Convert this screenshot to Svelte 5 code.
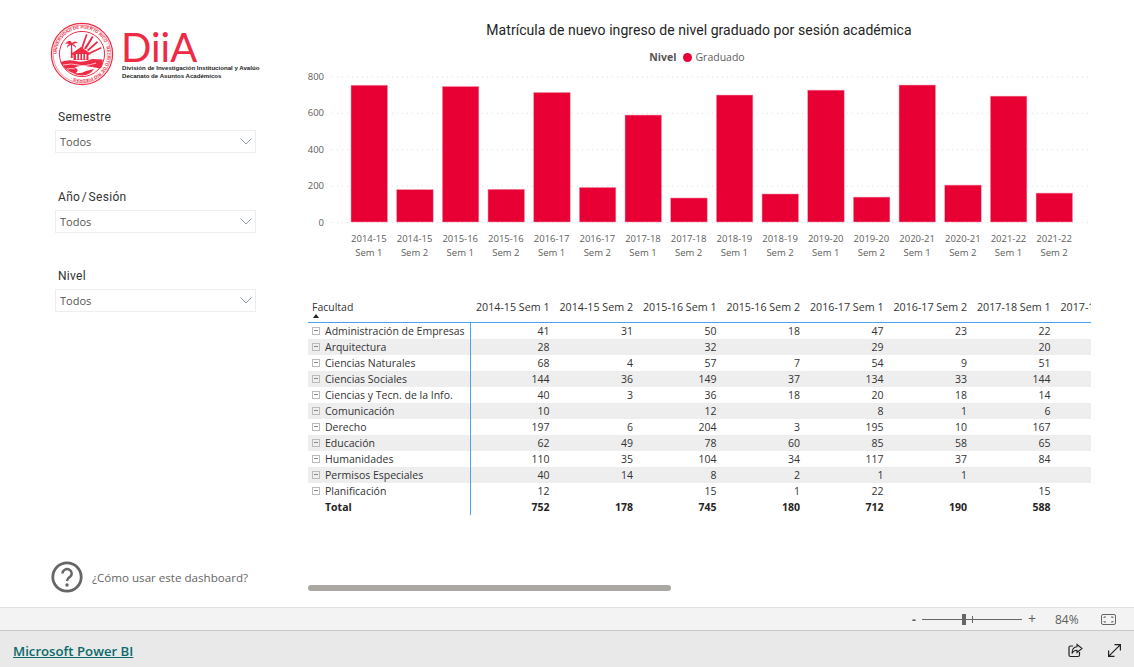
<script>
  const bars = [
    ['2014-15', 'Sem 1', 752], ['2014-15', 'Sem 2', 178], ['2015-16', 'Sem 1', 745], ['2015-16', 'Sem 2', 180],
    ['2016-17', 'Sem 1', 712], ['2016-17', 'Sem 2', 190], ['2017-18', 'Sem 1', 588], ['2017-18', 'Sem 2', 132],
    ['2018-19', 'Sem 1', 698], ['2018-19', 'Sem 2', 154], ['2019-20', 'Sem 1', 725], ['2019-20', 'Sem 2', 137],
    ['2020-21', 'Sem 1', 753], ['2020-21', 'Sem 2', 203], ['2021-22', 'Sem 1', 692], ['2021-22', 'Sem 2', 159]
  ];
  const ticks = [800, 600, 400, 200, 0];
  const scale = 0.1819;
  const baseY = 159;
  const slicers = ['Semestre', 'Año / Sesión', 'Nivel'];
  const cols = bars.slice(0, 8).map((b) => `${b[0]} ${b[1]}`);
  const rows = [
    ['Administración de Empresas', 41, 31, 50, 18, 47, 23, 22],
    ['Arquitectura', 28, '', 32, '', 29, '', 20],
    ['Ciencias Naturales', 68, 4, 57, 7, 54, 9, 51],
    ['Ciencias Sociales', 144, 36, 149, 37, 134, 33, 144],
    ['Ciencias y Tecn. de la Info.', 40, 3, 36, 18, 20, 18, 14],
    ['Comunicación', 10, '', 12, '', 8, 1, 6],
    ['Derecho', 197, 6, 204, 3, 195, 10, 167],
    ['Educación', 62, 49, 78, 60, 85, 58, 65],
    ['Humanidades', 110, 35, 104, 34, 117, 37, 84],
    ['Permisos Especiales', 40, 14, 8, 2, 1, 1, ''],
    ['Planificación', 12, '', 15, 1, 22, '', 15]
  ];
  const totals = [752, 178, 745, 180, 712, 190, 588];
</script>

<div class="app">
  <div class="report">
    <aside class="side">
      <div class="logo">
        <svg class="seal" viewBox="0 0 64 64" width="64" height="64" aria-hidden="true">
          <defs><path id="ring" d="M32 32 m-25.4 0 a25.4 25.4 0 1 1 50.8 0 a25.4 25.4 0 1 1 -50.8 0" /></defs>
          <circle cx="32" cy="32" r="30.6" fill="none" stroke="#ee2a45" stroke-width="1.2" />
          <circle cx="32" cy="32" r="28.9" fill="none" stroke="#ee2a45" stroke-width=".5" />
          <circle cx="32" cy="32" r="22.6" fill="#fff" stroke="#ee2a45" stroke-width="1" />
          <text class="ringtext"><textPath href="#ring">UNIVERSIDAD DE PUERTO RICO · RECINTO DE RIO PIEDRAS ·</textPath></text>
          <g fill="#ee2a45">
            <path d="M31 26 L36 12 L37.5 12.5 L33 26Z M34 26.500 L42 14 L43.5 15 L36 27.500Z M37 28 L47 19 L48 20.500 L38 29.500Z M39 30.500 L51 25 L51.500 26.500 L40 32Z" />
            <path d="M17 20 q3 -3 5 1 q3 -3 6 0 q-3 0 -5 1 q3 1 3 4 q-3 -3 -4 -3 l.8 13 h-2 l.2 -13 q-2 0 -4 3 q0 -3 2 -4 q-2 -1 -4 0 q1 -2 3 -2Z" />
            <path d="M21 32 L31 25 L41 32 L38.500 33 V38 H23.500 V33Z" />
            <path d="M10.500 40 q8 -3 15 -1 t17 -2 l10 .5 q1 6 -2 9 l-12 -2 q-8 -2 -14 1 q5 2 2 5 l-2 1 q-10 -3 -14 -11.500Z" />
            <path d="M22 50 q7 3 14 -1 l8 -2 q-4 6 -12 6.500 q-6 0 -10 -3.500Z" />
          </g>
          <g fill="#fff"><rect x="26" y="32" width="1.400" height="5.500" /><rect x="29" y="32" width="1.400" height="5.500" /><rect x="32" y="32" width="1.400" height="5.500" /><rect x="35" y="32" width="1.400" height="5.500" /></g>
          <path d="M13 43 q9 -2 15 0 t18 -2 M17 47 q5 -1 8 0 M34 47 q5 0 9 -2" fill="none" stroke="#fff" stroke-width=".7" />
        </svg>
        <div class="brand">
          <div class="diia">DiiA</div>
          <div class="sub">División de Investigación Institucional y Avalúo</div>
          <div class="sub">Decanato de Asuntos Académicos</div>
        </div>
      </div>

      <div class="slicers">
        {#each slicers as name}
          <div class="slicer">
            <div class="slabel">{name}</div>
            <div class="select">
              <span>Todos</span>
              <svg width="12" height="7" viewBox="0 0 12 7" aria-hidden="true"><path d="M.5 .5 L6 6 L11.500 .5" fill="none" stroke="#8a9aa8" stroke-width="1" /></svg>
            </div>
          </div>
        {/each}
      </div>

      <div class="help">
        <svg width="32" height="32" viewBox="0 0 32 32" aria-hidden="true">
          <circle cx="16" cy="16" r="14.200" fill="none" stroke="#666" stroke-width="2.800" />
          <path d="M11.500 12.500 a4.600 4.400 0 1 1 7.200 3.600 c-1.800 1.300 -2.700 2.100 -2.700 4" fill="none" stroke="#666" stroke-width="2.500" />
          <circle cx="16" cy="24" r="1.700" fill="#666" />
        </svg>
        <span>¿Cómo usar este dashboard?</span>
      </div>
    </aside>

    <main class="main">
      <h1>Matrícula de nuevo ingreso de nivel graduado por sesión académica</h1>
      <div class="legend"><b>Nivel</b><i></i><span>Graduado</span></div>
      <svg class="chart" width="800" height="168" viewBox="0 0 800 168">
        {#each ticks as t}
          <line x1="32" x2="788" y1={baseY - t * scale + 0.5} y2={baseY - t * scale + 0.5} class="grid" />
          <text x="24" y={baseY - t * scale + 3.500} class="axis" text-anchor="end">{t}</text>
        {/each}
        {#each bars as b, i}
          <rect x={51 + i * 45.67} y={baseY - b[2] * scale} width="36.500" height={b[2] * scale} class="bar" />
        {/each}
      </svg>
      <div class="xlabels">
        {#each bars as b}
          <div><span>{b[0]}</span><span>{b[1]}</span></div>
        {/each}
      </div>

      <div class="tablewrap">
        <table>
          <thead>
            <tr>
              <th class="first">Facultad<em></em></th>
              {#each cols as c}<th>{c}</th>{/each}
            </tr>
          </thead>
          <tbody>
            {#each rows as r}
              <tr>
                <td class="first"><u></u>{r[0]}</td>
                {#each r.slice(1) as v}<td>{v}</td>{/each}
                <td></td>
              </tr>
            {/each}
            <tr class="total">
              <td class="first"><u class="none"></u>Total</td>
              {#each totals as v}<td>{v}</td>{/each}
              <td></td>
            </tr>
          </tbody>
        </table>
      </div>
      <div class="scroll"></div>
    </main>
  </div>

  <div class="status">
    <span class="minus">-</span>
    <div class="slider"><i></i><s></s></div>
    <span class="plus">+</span>
    <span class="pct">84%</span>
    <svg width="15" height="11" viewBox="0 0 15 11" aria-hidden="true">
      <rect x=".5" y=".5" width="14" height="10" rx="1.500" fill="none" stroke="#666" />
      <path d="M3 4 V3 H5 M10 3 H12 V4 M12 7 V8 H10 M5 8 H3 V7" fill="none" stroke="#666" />
    </svg>
  </div>

  <footer>
    <a href="#top">Microsoft Power BI</a>
    <div class="actions">
      <svg width="15" height="15" viewBox="0 0 15 15" aria-hidden="true">
        <path d="M5 3 H2.500 A1.500 1.500 0 0 0 1 4.500 V12 A1.500 1.500 0 0 0 2.500 13.500 H10 A1.500 1.500 0 0 0 11.500 12 V9" fill="none" stroke="#222" stroke-width="1.200" />
        <path d="M9 1.500 L14 5.500 L9 9.500 V7.200 C6.500 7.200 5 8.200 4 10.500 C4 6.500 6 4 9 3.800Z" fill="none" stroke="#222" stroke-width="1.100" />
      </svg>
      <svg width="13" height="13" viewBox="0 0 13 13" aria-hidden="true">
        <path d="M.6 12.400 L12.400 .6 M6.500 .6 H12.400 V6.500 M.6 6.500 V12.400 H6.500" fill="none" stroke="#222" stroke-width="1.200" />
      </svg>
    </div>
  </footer>
</div>

<style>
  :global(body) { margin: 0; background: #fff; }
  .app {
    width: 1134px;
    height: 667px;
    display: flex;
    flex-direction: column;
    overflow: hidden;
    font-family: "Open Sans", "Noto Sans", sans-serif;
    color: #333;
  }
  .report { height: 607px; display: flex; }

  .side { width: 308px; flex: none; display: flex; flex-direction: column; box-sizing: border-box; padding: 22px 0 14px 51px; }
  .logo { display: flex; gap: 7px; height: 64px; }
  .seal { display: block; margin-left: -1px; }
  .ringtext { font: 700 4.300px "Liberation Sans", sans-serif; fill: #ee2a45; }
  .brand { padding-top: 7px; }
  .diia { font: 400 40px/36px "Lato", sans-serif; color: #ee2a45; height: 35px; }
  .sub { font: 700 6.100px/8px "Liberation Sans", sans-serif; color: #222; white-space: nowrap; margin-left: 1px; }
  .slicers { margin: 23px 0 0 4px; display: flex; flex-direction: column; gap: 35.500px; }
  .slicer { width: 201px; }
  .slabel { font: 400 12px/16px "Roboto", sans-serif; letter-spacing: .3px; word-spacing: -1.700px; color: #333; padding-left: 3px; margin-bottom: 5px; }
  .select {
    box-sizing: border-box;
    height: 23px;
    border: 1.500px solid #eee;
    display: flex;
    align-items: center;
    justify-content: space-between;
    padding: 0 3.500px 0 4px;
    font-size: 11px;
    color: #555;
  }
  .help { margin-top: auto; display: flex; align-items: center; gap: 9px; font-size: 11.600px; color: #666; }

  .main { flex: 1; min-width: 0; position: relative; }
  h1 {
    margin: 22px 0 0;
    font: 400 14px/17px "Roboto", sans-serif;
    letter-spacing: .05px;
    color: #252423;
    text-align: center;
    width: 782px;
  }
  .legend { display: flex; align-items: center; justify-content: center; gap: 3px; width: 778px; height: 16px; margin-top: 10px; font-size: 10.500px; color: #605e5c; }
  .legend b { font-weight: 700; color: #555; margin-right: 4px; }
  .legend i { width: 9px; height: 9px; border-radius: 50%; background: #e80035; }
  .chart { display: block; margin: -2px 0 0 -8px; }
  .grid { stroke: #ddd; stroke-width: 1; stroke-dasharray: 1 4; }
  .axis { font: 400 9.500px "Open Sans", sans-serif; fill: #605e5c; }
  .bar { fill: #e80035; stroke: #f39ab0; stroke-width: .5; }
  .xlabels { display: flex; margin-left: 38px; width: 731px; height: 45px; margin-top: 1px; }
  .xlabels div { flex: 1; display: flex; flex-direction: column; align-items: center; font-size: 9.500px; line-height: 14px; color: #605e5c; }
  .xlabels div span { white-space: nowrap; }

  .tablewrap { width: 783px; overflow: hidden; margin-top: 16px; }
  table { border-collapse: collapse; table-layout: fixed; width: 830px; font-size: 10.500px; color: #333; }
  th { font-weight: 400; width: 83.500px; height: 29px; box-sizing: border-box; text-align: right; padding: 0 0 1px 0; white-space: nowrap; overflow: hidden; border-bottom: 1px solid #4aa3ee; }
  th:not(.first) { padding-right: 4px; font-size: 10.700px; }
  th.first { width: 162px; text-align: left; padding-left: 4px; position: relative; }
  th em { position: absolute; left: 5px; top: 21px; width: 0; height: 0; border: 3.500px solid transparent; border-top: 0; border-bottom: 4px solid #222; }
  td { height: 16px; padding: 1px 4px 0 0; text-align: right; line-height: 15px; white-space: nowrap; overflow: hidden; box-sizing: border-box; }
  td.first { text-align: left; padding: 1px 0 0; border-right: 1px solid #4aa3ee; }
  tbody tr:nth-child(even):not(.total) { background: #eee; }
  u { display: inline-block; box-sizing: border-box; width: 8px; height: 8px; margin: 0 5px 0 4px; border: 1px solid #bbb; background: linear-gradient(#888, #888) center / 4px 1px no-repeat; vertical-align: 0; text-decoration: none; }
  u.none { visibility: hidden; }
  .total td { font-weight: 700; color: #252423; }
  .scroll { position: absolute; left: 0; top: 585px; width: 363px; height: 6px; border-radius: 3px; background: #aaa7a3; }

  .status {
    box-sizing: border-box;
    height: 24px;
    background: #f3f3f3;
    border-top: 1px solid #e2e2e2;
    border-bottom: 1px solid #c8c8c8;
    display: flex;
    align-items: center;
    padding-left: 912px;
    font-size: 12px;
    color: #605e5c;
  }
  .minus { width: 10px; font-weight: 700; }
  .slider { width: 100px; height: 1px; background: #666; position: relative; }
  .slider i { position: absolute; left: 40px; top: -5px; width: 4px; height: 11px; background: #666; }
  .slider s { position: absolute; left: 50px; top: -3px; width: 1px; height: 7px; background: #666; }
  .plus { width: 18px; margin-left: 6px; font-size: 14px; line-height: 14px; }
  .pct { margin-left: 9px; width: 46px; }

  footer { flex: 1; background: #e9e9e9; display: flex; align-items: center; justify-content: space-between; padding: 3px 13px 0; }
  footer a { font: 600 13.200px "Open Sans", sans-serif; color: #0b6a6b; text-decoration: underline; }
  .actions { display: flex; align-items: center; gap: 25px; }
</style>
